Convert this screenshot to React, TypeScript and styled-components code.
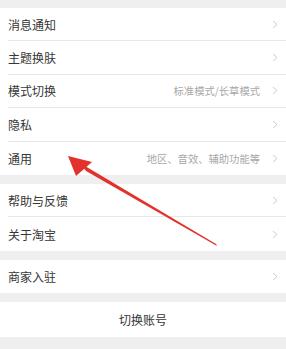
import styled, { createGlobalStyle } from "styled-components";

const GlobalStyle = createGlobalStyle`
  html, body {
    margin: 0;
    padding: 0;
    background: #efefef;
    font-family: "Noto Sans CJK SC", "Noto Sans", sans-serif;
  }
`;

type Item = { label: string; value?: string };

const groups: Item[][] = [
  [
    { label: "消息通知" },
    { label: "主题换肤" },
    { label: "模式切换", value: "标准模式/长草模式" },
    { label: "隐私" },
    { label: "通用", value: "地区、音效、辅助功能等" },
  ],
  [{ label: "帮助与反馈" }, { label: "关于淘宝" }],
  [{ label: "商家入驻" }],
];

export default function App() {
  return (
    <>
      <GlobalStyle />
      <Page>
        {groups.map((group, gi) => (
          <Group key={gi}>
            {group.map((item) => (
              <Row key={item.label}>
                <Label>{item.label}</Label>
                {item.value && <Value>{item.value}</Value>}
                <Chevron width="6" height="9" viewBox="0 0 6 9">
                  <polyline
                    points="1,1 5,4.5 1,8"
                    fill="none"
                    stroke="#cccccc"
                    strokeWidth="1"
                  />
                </Chevron>
              </Row>
            ))}
          </Group>
        ))}
        <SwitchButton>切换账号</SwitchButton>
        {/* red annotation arrow drawn over the list */}
        <Arrow width="286" height="349" viewBox="0 0 286 349">
          <polygon
            points="80,163 86,171 217,246 216,244"
            fill="#e2322c"
          />
          <polygon points="68,156 76,176 92,162" fill="#e2322c" />
        </Arrow>
      </Page>
    </>
  );
}

const Page = styled.div`
  position: relative;
  width: 286px;
  height: 349px;
  padding-top: 8px;
  box-sizing: border-box;
  display: flex;
  flex-direction: column;
  gap: 9px;
  overflow: hidden;
`;

const Group = styled.section`
  background: #ffffff;
`;

const Row = styled.div`
  height: 33.4px;
  box-sizing: border-box;
  margin-left: 8px;
  padding-right: 8px;
  display: flex;
  align-items: center;
  border-bottom: 1px solid #e8e8e8;

  &:last-child {
    border-bottom: none;
  }
`;

const Label = styled.span`
  flex: 1;
  font-size: 12px;
  color: #363636;
`;

const Value = styled.span`
  font-size: 10.3px;
  color: #a8a8a8;
  margin-right: 12px;
`;

const Chevron = styled.svg`
  display: block;
  flex-shrink: 0;
`;

const SwitchButton = styled.div`
  height: 35px;
  background: #ffffff;
  display: flex;
  align-items: center;
  justify-content: center;
  font-size: 12px;
  color: #363636;
`;

const Arrow = styled.svg`
  position: absolute;
  left: 0;
  top: 0;
  pointer-events: none;
`;
